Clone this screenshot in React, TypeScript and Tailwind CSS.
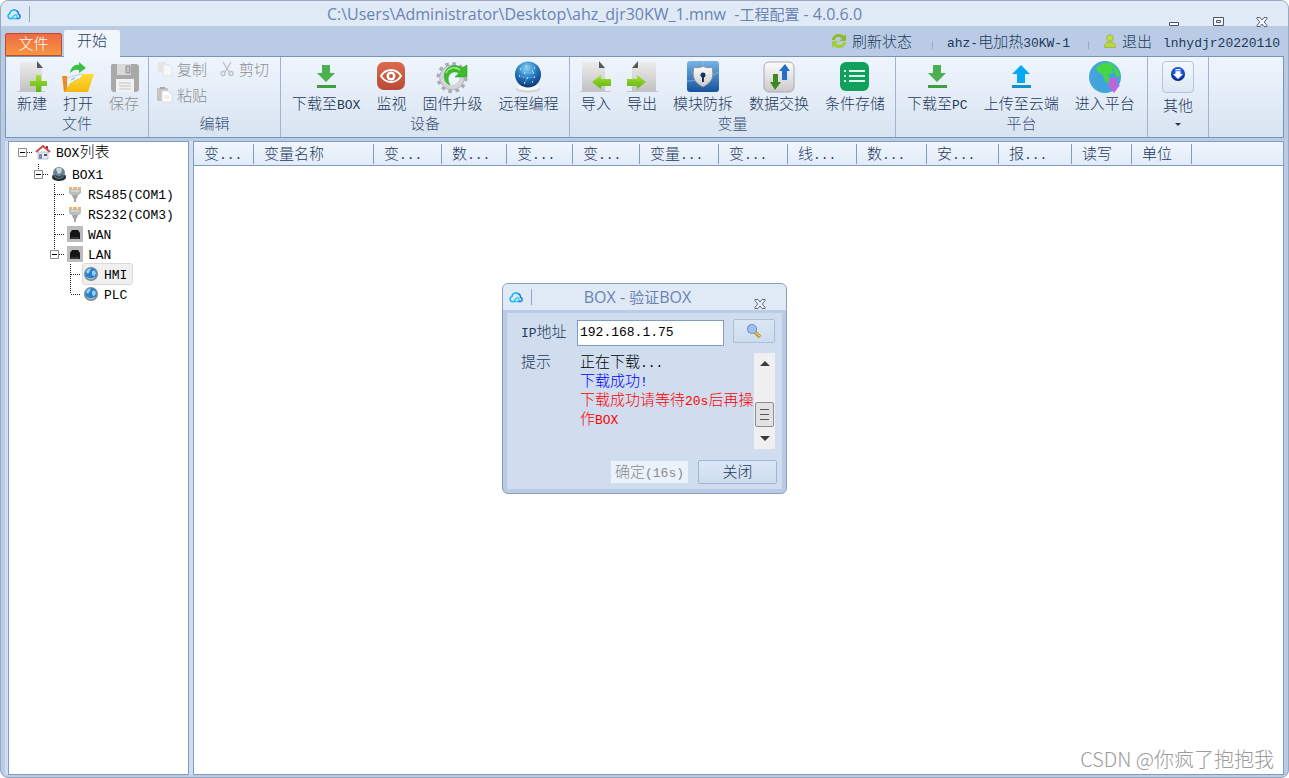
import { Fragment, type ReactNode } from "react";
import clsx from "clsx";

const SONG = "font-['Noto_Sans_CJK_SC',sans-serif] font-light text-[15px] leading-5";

// Latin runs are set in a half-width face, CJK keeps the full size
function Txt({ children }: { children: string }) {
  const parts = children.split(/([\x20-\x7e]+)/).filter(Boolean);
  return (
    <>
      {parts.map((p, i) =>
        /^[\x20-\x7e]/.test(p) ? (
          <span key={i} className="font-['Liberation_Mono',monospace] text-[13px] leading-none whitespace-pre">{p}</span>
        ) : (
          <Fragment key={i}>{p}</Fragment>
        )
      )}
    </>
  );
}

/* ---------- icons ---------- */

function Defs() {
  return (
    <svg width="0" height="0" className="absolute" aria-hidden="true">
      <defs>
        <linearGradient id="page" x1="0" y1="0" x2="0" y2="1">
          <stop offset="0" stopColor="#ececec" />
          <stop offset="1" stopColor="#c2c2c2" />
        </linearGradient>
        <linearGradient id="green" x1="0" y1="0" x2="0" y2="1">
          <stop offset="0" stopColor="#a4e02c" />
          <stop offset="1" stopColor="#5fb414" />
        </linearGradient>
        <linearGradient id="red" x1="0" y1="0" x2="0" y2="1">
          <stop offset="0" stopColor="#dd6a4e" />
          <stop offset="1" stopColor="#b94a37" />
        </linearGradient>
        <linearGradient id="blue" x1="0" y1="0" x2="0" y2="1">
          <stop offset="0" stopColor="#76b4e8" />
          <stop offset="1" stopColor="#15539f" />
        </linearGradient>
        <linearGradient id="silver" x1="0" y1="0" x2="0" y2="1">
          <stop offset="0" stopColor="#fdfdfd" />
          <stop offset="1" stopColor="#c9c9cb" />
        </linearGradient>
        <linearGradient id="folder" x1="0" y1="0" x2="0" y2="1">
          <stop offset="0" stopColor="#ffdc39" />
          <stop offset="1" stopColor="#f5b90f" />
        </linearGradient>
        <radialGradient id="ball" cx=".45" cy=".25" r=".8">
          <stop offset="0" stopColor="#8fd3f4" />
          <stop offset=".5" stopColor="#2377bd" />
          <stop offset="1" stopColor="#0b2d66" />
        </radialGradient>
        <radialGradient id="ball2" cx=".5" cy=".4" r=".6">
          <stop offset="0" stopColor="#3d8bff" />
          <stop offset=".6" stopColor="#1550d8" />
          <stop offset="1" stopColor="#06185e" />
        </radialGradient>
      </defs>
    </svg>
  );
}

function Icon({ children, size = 32 }: { children: ReactNode; size?: 14 | 16 | 32 }) {
  return (
    <svg viewBox={`0 0 ${size} ${size}`} width={size} height={size} className="block shrink-0" aria-hidden="true">
      {children}
    </svg>
  );
}

function CloudLogo() {
  return (
    <Icon size={14}>
      <path d="M5.500 11.500H3.500a2.500 2.500 0 0 1-.6-4.900A4 4 0 0 1 10 4.400" fill="none" stroke="#1ab0f5" strokeWidth="1.500" />
      <path d="M4.500 11.500 7.500 8c1.500-.8 3 .8 2.500 3.500z" fill="none" stroke="#25c8f8" strokeWidth="1.300" />
      <path d="M9.500 3.800c1.500.6 2 2 2 3.400a2.300 2.300 0 0 1 0 4.400H9.800" fill="none" stroke="#1674e8" strokeWidth="1.500" />
    </Icon>
  );
}

const NewIcon = () => (
  <Icon>
    <path d="M1 30.500h28" stroke="#aaa" strokeOpacity=".6" />
    <path d="M4 1h17l5 6v23H4z" fill="url(#page)" />
    <path d="M21 0v7h6z" fill="#585858" />
    <path d="M20 14h5v6h6v5h-6v6h-5v-6h-6v-5h6z" fill="url(#green)" />
  </Icon>
);

const OpenIcon = () => (
  <Icon>
    <path d="M0 15h5v15l-3 1z" fill="#ef8b1d" />
    <path d="m5 17 14-4 8 4-3 10H5z" fill="#eef3f8" stroke="#9fb4c8" strokeWidth=".6" />
    <path d="m9 19 4-2m-2 4 6-3m-3 3 6-2" stroke="#7fa6cb" />
    <path d="M8 22 17 18l4-5h11l-6 18H3z" fill="url(#folder)" />
    <path d="M8 12c1-7 6-9 9-8V1l7 6-7 5V9c-4-1-6 0-9 3z" fill="#3cc043" />
  </Icon>
);

const SaveIcon = () => (
  <Icon>
    <path d="M4 3h25l2 2v24l-2 2H5l-2-2V4z" fill="#a9a9a9" />
    <path d="M9 3h14v11H9z" fill="#d9d9d9" />
    <path d="M18 5h4v7h-4z" fill="#c1c1c1" stroke="#8f8f8f" />
    <path d="M8 18h18v13H8z" fill="#f2f2f2" />
    <path d="M11 22h12M11 25h12M11 28h12" stroke="#c4c4c4" />
  </Icon>
);

const CopyIcon = () => (
  <Icon size={16}>
    <path d="M1 1h8v10H1z" fill="#e3e5e8" />
    <path d="M6 4h6l3 3v8H6z" fill="#f6f7f9" stroke="#e0e3e7" />
  </Icon>
);

const PasteIcon = () => (
  <Icon size={16}>
    <path d="M0 1h11v13H0z" fill="#c4c4c4" />
    <path d="M3 0h5v2H3z" fill="#aaa" />
    <path d="M5 4h6l4 4v7H5z" fill="#fff" stroke="#dcdcdc" />
    <path d="M7 9h5m-5 2h6" stroke="#dedede" />
  </Icon>
);

const CutIcon = () => (
  <Icon size={16}>
    <path d="m4 1 6 10M12 1 6 11" stroke="#bdc0c4" strokeWidth="1.4" />
    <circle cx="4" cy="12.500" r="2" fill="none" stroke="#bdc0c4" strokeWidth="1.300" />
    <circle cx="12" cy="12.500" r="2" fill="none" stroke="#bdc0c4" strokeWidth="1.300" />
  </Icon>
);

const DownloadIcon = () => (
  <Icon>
    <path d="M12 4h8v8h5l-9 9-9-9h5z" fill="#4caf50" />
    <path d="M7 24h19v3H7z" fill="#3f9d44" />
  </Icon>
);

const UploadIcon = () => (
  <Icon>
    <path d="M12 22h8v-9h5l-9-9-9 9h5z" fill="#03a9f4" />
    <path d="M7 24h19v3H7z" fill="#1290cc" />
  </Icon>
);

const EyeIcon = () => (
  <Icon>
    <rect x="2" y="1" width="28" height="28" rx="7" fill="url(#red)" />
    <path d="M6 15c5-8 15-8 20 0-5 8-15 8-20 0z" fill="none" stroke="#fff" strokeWidth="2" />
    <circle cx="16" cy="15" r="4.500" fill="#fff" />
    <circle cx="16" cy="15" r="2" fill="#c65642" />
  </Icon>
);

const GearIcon = () => (
  <Icon>
    <circle cx="16" cy="16.500" r="13.500" fill="none" stroke="#a8abb3" strokeWidth="4" strokeDasharray="3.500 3.570" />
    <circle cx="16" cy="16.500" r="10" fill="none" stroke="#d3d5d9" strokeWidth="5" />
    <circle cx="16" cy="16.500" r="12.300" fill="none" stroke="#a2a5ad" strokeWidth=".7" />
    <circle cx="17" cy="16" r="6" fill="#eaf6fb" />
    <path d="M14 24C6 21 6 8 16 5c4-1 8 0 10 2l5-3v12H19l4-4c-8-4-14 4-9 12z" fill="#3dbb2d" stroke="#2c9a22" strokeWidth=".5" />
    <path d="M10 12c2-5 9-7 14-3" fill="none" stroke="#a6ed8d" strokeWidth="1.500" />
  </Icon>
);

const GlobeIcon = () => (
  <Icon>
    <ellipse cx="16" cy="28" rx="12" ry="3.500" fill="#cfd2d6" />
    <ellipse cx="16" cy="26.500" rx="11" ry="3" fill="#f8f8f8" />
    <circle cx="16" cy="13.500" r="13" fill="url(#ball)" />
    <path d="M8 8h1m5-3h1m7 2h1m-11 5h1m8 0h1M7 15h1m7 2h1m6-1h1m-11 6h1m7-1h1m-1-11h1" stroke="#cdf1ff" strokeWidth="1.400" />
    <path d="m8 8 6 4 8 0M7 15l8 2 7-1m-7 1-2 5" stroke="#8fd5f4" strokeWidth=".4" fill="none" />
  </Icon>
);

const ImportIcon = () => (
  <Icon>
    <path d="M0 30.500h31" stroke="#aaa" strokeOpacity=".6" />
    <path d="M2 1h17l6 6v23H2z" fill="url(#page)" />
    <path d="M19 0v7h6z" fill="#585858" />
    <path d="m12 21 9-7v4h10v7H21v3z" fill="url(#green)" />
  </Icon>
);

const ExportIcon = () => (
  <Icon>
    <path d="M1 30.500h31" stroke="#aaa" strokeOpacity=".6" />
    <path d="M12 1h18v29H6V7z" fill="url(#page)" />
    <path d="M12 0v7H6z" fill="#585858" />
    <path d="m20 21-9-7v4H1v7h10v3z" fill="url(#green)" />
  </Icon>
);

const ShieldIcon = () => (
  <Icon>
    <rect x="0" y="0" width="32" height="31" rx="3" fill="url(#blue)" />
    <path d="M16 0v8M0 20c10 0 22-3 32-9" stroke="#8ec3ef" strokeWidth=".7" fill="none" />
    <path d="M16 5c3 2 6 2 9 1 2 9 1 15-9 20C6 21 5 15 7 6c3 1 6 1 9-1z" fill="url(#silver)" stroke="#8b8f96" />
    <circle cx="16" cy="14" r="2.500" fill="#18335c" />
    <path d="M15 15h2v6h-2z" fill="#18335c" />
  </Icon>
);

const SwapIcon = () => (
  <Icon>
    <rect x="1" y="1" width="30" height="30" rx="5" fill="url(#silver)" stroke="#aaa" />
    <path d="M10 13h5v8h3l-6 8-5-8h3z" fill="#3d8a22" />
    <path d="M19 19v-9h-3l6-7 5 7h-3v9z" fill="#236fc8" />
  </Icon>
);

const ListIcon = () => (
  <Icon>
    <rect x="1" y="1" width="29" height="29" rx="6" fill="#0fa15b" />
    <path d="M10 10h16M10 15h16M10 20h16" stroke="#dff6ea" strokeWidth="2" />
    <path d="M5 10h2M5 15h2M5 20h2" stroke="#dff6ea" strokeWidth="2" />
  </Icon>
);

const PlatformIcon = () => (
  <Icon>
    <circle cx="16" cy="16" r="16" fill="#41a5dc" />
    <path d="M9 5c4-3 9-4 13-3l4 4-3 2 1 4-5 2 2 4-1 5-4-3-2-6-5-3-2-4z" fill="#43d843" />
    <path d="m25 5 5 5 1 6-4-1-2-5z" fill="#43d843" />
    <path d="M20 17h8v7h3l-6 8-6-8h1z" fill="#bd63dc" />
  </Icon>
);

const RefreshIcon = () => (
  <Icon size={16}>
    <path d="M1 7C1 1 9-1 13 3l2-2v7H8l3-2.500C8 3 4 4 4 7z" fill="#8dbb2a" />
    <path d="M15 9c0 6-8 8-12 4l-2 2V8h7l-3 2.500C8 13 12 12 12 9z" fill="#a3cd36" />
  </Icon>
);

const UserIcon = () => (
  <Icon size={14}>
    <circle cx="7" cy="4" r="3.300" fill="#c3dc45" stroke="#93ad2b" strokeWidth=".7" />
    <path d="M1.500 13.500c0-4 2-5 4-5.500h3c2 .5 4 1.500 4 5.500z" fill="#bcd740" stroke="#93ad2b" strokeWidth=".7" />
  </Icon>
);

const OtherIcon = () => (
  <Icon size={16}>
    <circle cx="8" cy="8" r="7" fill="url(#ball2)" />
    <path d="M5.500 3h5v1.200h-5zM5.500 5.200h5V8H13l-5 5-5-5h2.500z" fill="#fff" />
  </Icon>
);

const HouseIcon = () => (
  <Icon size={16}>
    <path d="M3 8h10v7H3z" fill="#e6e8ee" stroke="#a9afbd" strokeWidth=".7" />
    <path d="M11 2h2v4h-2z" fill="#9a3a32" />
    <path d="m1 8 7-6 7 6" fill="none" stroke="#c9494a" strokeWidth="2" />
    <path d="M4 10h3v5H4z" fill="#6d8fc4" />
    <path d="M9 10h3v2H9z" fill="#4b5a78" />
  </Icon>
);

const BoxIcon = () => (
  <Icon size={16}>
    <path d="M1.500 9h13l.5 3c-2 4-12 4-14 0z" fill="#26292d" />
    <circle cx="8" cy="7" r="6" fill="#6c8290" />
    <path d="M5 3c2-2 5-1 6 0l-1 4-3 1z" fill="#c1d6dd" />
    <path d="M4 9c2 3 6 3 8 0" stroke="#33474f" fill="none" strokeWidth="1.500" />
  </Icon>
);

const PlugIcon = () => (
  <Icon size={16}>
    <path d="M2 1h3v2H2zm4 0h4v2H6zm5 0h3v2h-3z" fill="#f3b65c" />
    <path d="M2 3h12v4l-2 2H4L2 7z" fill="#bcbdbf" />
    <path d="M5 9h6l-1 3-1 1v3H7v-3l-1-1z" fill="#a3a4a6" />
    <path d="M4 5h8" stroke="#e9e9e9" />
  </Icon>
);

const PortIcon = () => (
  <Icon size={16}>
    <path d="M0 0h16v16H0z" fill="#bcbcbc" />
    <path d="M3 13V7l2-3h6l2 3v6z" fill="#151515" />
    <path d="M4 12h8" stroke="#555" />
  </Icon>
);

const EarthIcon = () => (
  <Icon size={16}>
    <circle cx="8" cy="8" r="7" fill="#7b8b96" />
    <circle cx="8" cy="7.500" r="5.500" fill="#2a7fc8" />
    <path d="M3 6c1-3 3-4 5-3.500L7 5 5 8zm6-1 3-.5 1 3-2 3-2-2z" fill="#8fd0f4" />
    <path d="M4 11c2 2.500 6 2.500 8 0" fill="none" stroke="#c3ccd2" />
  </Icon>
);

const SearchIcon = () => (
  <Icon size={16}>
    <path d="m9 9 5 5" stroke="#b79526" strokeWidth="3.500" />
    <path d="m9 9 5 4" stroke="#e3cf6d" strokeWidth="1.200" />
    <circle cx="6" cy="6" r="4.500" fill="#9cc1f2" stroke="#7b93c4" strokeWidth="1.200" />
  </Icon>
);

const CloseIcon = () => (
  <Icon size={14}>
    <path d="M2 2.500h3L7 5l2-2.500h3v1.200L9.200 7l2.800 3.300v1.200H9L7 9l-2 2.500H2v-1.200L4.800 7 2 3.700z" fill="#f4f7fb" stroke="#4c5666" strokeWidth=".9" />
  </Icon>
);

/* ---------- ribbon ---------- */

type Tool = { label: string; icon: ReactNode; disabled?: boolean };

function RibbonGroup({ title, width, children }: { title: string; width: string; children: ReactNode }) {
  return (
    <section className={clsx("flex shrink-0 flex-col justify-between border-r border-[#9db4d3] pb-1", width)}>
      {children}
      <h2 className="text-center text-[#3b5178]">{title}</h2>
    </section>
  );
}

function Tools({ items }: { items: Tool[] }) {
  return (
    <div className="flex gap-4 px-[11px] pt-1">
      {items.map((t) => (
        <button key={t.label} disabled={t.disabled} className="flex flex-col items-center whitespace-nowrap disabled:text-[#8d8d8d]">
          <span className="flex w-[30px] justify-center">{t.icon}</span>
          <span><Txt>{t.label}</Txt></span>
        </button>
      ))}
    </div>
  );
}

const FILE_TOOLS: Tool[] = [
  { label: "新建", icon: <NewIcon /> },
  { label: "打开", icon: <OpenIcon /> },
  { label: "保存", icon: <SaveIcon />, disabled: true },
];

const DEVICE_TOOLS: Tool[] = [
  { label: "下载至BOX", icon: <DownloadIcon /> },
  { label: "监视", icon: <EyeIcon /> },
  { label: "固件升级", icon: <GearIcon /> },
  { label: "远程编程", icon: <GlobeIcon /> },
];

const VARIABLE_TOOLS: Tool[] = [
  { label: "导入", icon: <ImportIcon /> },
  { label: "导出", icon: <ExportIcon /> },
  { label: "模块防拆", icon: <ShieldIcon /> },
  { label: "数据交换", icon: <SwapIcon /> },
  { label: "条件存储", icon: <ListIcon /> },
];

const PLATFORM_TOOLS: Tool[] = [
  { label: "下载至PC", icon: <DownloadIcon /> },
  { label: "上传至云端", icon: <UploadIcon /> },
  { label: "进入平台", icon: <PlatformIcon /> },
];

function Ribbon() {
  return (
    <div className="mx-1 flex h-[82px] shrink-0 border border-[#7795bb] bg-linear-to-b from-[#eff5fd] to-[#d8e4f1]">
      <RibbonGroup title="文件" width="w-[143px]">
        <Tools items={FILE_TOOLS} />
      </RibbonGroup>
      <RibbonGroup title="编辑" width="w-[132px]">
        <div className="grid grid-cols-[auto_auto] justify-start gap-x-3 gap-y-[6px] pt-[2px] pl-2 text-[#8d8d8d]">
          <button disabled className="flex items-center gap-1"><CopyIcon />复制</button>
          <button disabled className="flex items-center gap-1"><CutIcon />剪切</button>
          <button disabled className="flex items-center gap-1"><PasteIcon />粘贴</button>
        </div>
      </RibbonGroup>
      <RibbonGroup title="设备" width="w-[289px]">
        <Tools items={DEVICE_TOOLS} />
      </RibbonGroup>
      <RibbonGroup title="变量" width="w-[326px]">
        <Tools items={VARIABLE_TOOLS} />
      </RibbonGroup>
      <RibbonGroup title="平台" width="w-[252px]">
        <Tools items={PLATFORM_TOOLS} />
      </RibbonGroup>
      <div className="flex w-[61px] shrink-0 justify-center border-r border-[#9db4d3] pt-1">
        <button className="flex flex-col items-center">
          <span className="flex h-8 w-8 justify-center rounded border border-[#b3c3d9] bg-linear-to-b from-[#f3f8fe] to-[#dde7f3] pt-1">
            <OtherIcon />
          </span>
          <span className="pt-[2px]">其他</span>
          <svg width="6" height="12" viewBox="0 0 6 12" aria-hidden="true">
            <path d="M0 8h6L3 11z" fill="#1e395b" />
          </svg>
        </button>
      </div>
    </div>
  );
}

/* ---------- tree ---------- */

type Node = { label: string; icon: ReactNode; children?: Node[]; selected?: boolean };

const TREE: Node = {
  label: "BOX列表",
  icon: <HouseIcon />,
  children: [
    {
      label: "BOX1",
      icon: <BoxIcon />,
      children: [
        { label: "RS485(COM1)", icon: <PlugIcon /> },
        { label: "RS232(COM3)", icon: <PlugIcon /> },
        { label: "WAN", icon: <PortIcon /> },
        {
          label: "LAN",
          icon: <PortIcon />,
          children: [
            { label: "HMI", icon: <EarthIcon />, selected: true },
            { label: "PLC", icon: <EarthIcon /> },
          ],
        },
      ],
    },
  ],
};

function Branch({ node, root, last }: { node: Node; root?: boolean; last?: boolean }) {
  const lines = (
    <svg width="21" height="20" viewBox="0 0 21 20" className="block" aria-hidden="true">
      {!root && <path d={last ? "M8.5 0v10" : "M8.5 0v20"} stroke="#222" strokeDasharray="1 1" />}
      <path d="M9 10.500h9" stroke="#222" strokeDasharray="1 1" />
      {node.children && (
        <>
          <path d="M4.500 6.500h8v8h-8z" fill="#fff" stroke="#8a8a8a" />
          <path d="M6 10.500h5" stroke="#000" />
        </>
      )}
    </svg>
  );
  return (
    <li>
      <div className="flex h-5 items-center">
        {node.children ? <button aria-label={`折叠 ${node.label}`}>{lines}</button> : lines}
        <a
          href="#"
          className={clsx(
            "flex h-5 items-center gap-[5px] pr-[5px] whitespace-nowrap",
            node.selected && "rounded-xs bg-[#f0f0f0] outline outline-[#d9d9d9]"
          )}
        >
          {node.icon}
          <span className="pb-[2px]"><Txt>{node.label}</Txt></span>
        </a>
      </div>
      {node.children && (
        <ul className={clsx("pl-4", root && "pt-[2px]")}>
          {node.children.map((c, i) => (
            <Branch key={c.label} node={c} last={i === node.children!.length - 1} />
          ))}
        </ul>
      )}
    </li>
  );
}

/* ---------- variable table ---------- */

const COLUMNS = [
  { label: "变...", width: 60 },
  { label: "变量名称", width: 120 },
  { label: "变...", width: 68 },
  { label: "数...", width: 65 },
  { label: "变...", width: 66 },
  { label: "变...", width: 67 },
  { label: "变量...", width: 79 },
  { label: "变...", width: 69 },
  { label: "线...", width: 69 },
  { label: "数...", width: 70 },
  { label: "安...", width: 72 },
  { label: "报...", width: 73 },
  { label: "读写", width: 60 },
  { label: "单位", width: 60 },
];

function VariableTable() {
  return (
    <table className="w-full table-fixed border-collapse">
      <thead>
        <tr className="border-b border-[#7f9dc4] bg-linear-to-b from-[#f1f6fd] to-[#e1ebf8] text-left">
          {COLUMNS.map((c, i) => (
            <th key={i} style={{ width: c.width }} className="p-0 pt-[2px] pb-px font-light whitespace-nowrap">
              <div className="h-5 border-r border-[#7f9dc4] pl-[10px] leading-[18px]">
                <Txt>{c.label}</Txt>
              </div>
            </th>
          ))}
          <td />
        </tr>
      </thead>
      <tbody />
    </table>
  );
}

/* ---------- dialog ---------- */

function VerifyDialog() {
  return (
    <div role="dialog" aria-label="BOX - 验证BOX" className="w-[285px] overflow-hidden rounded-md border border-[#8b9db8] bg-[#bacce5]">
      <header className="flex h-[26px] items-center bg-[#dfeaf6] pr-[19px] pl-[6px]">
        <CloudLogo />
        <span className="ml-2 h-4 border-l border-[#8ea5c8]" />
        <h2 className="flex-1 pr-[10px] text-center font-['Open_Sans','Noto_Sans_CJK_SC',sans-serif] text-[16px] font-normal text-[#6a83b3]">
          BOX - <span className="text-[15px] leading-none">验证</span>BOX
        </h2>
        <button aria-label="关闭窗口" className="pt-[14px]"><CloseIcon /></button>
      </header>
      <div className="m-1 mt-[3px] bg-[#cfddee] pt-[6px] pr-[5px] pb-[5px] pl-[14px]">
        <div className="grid grid-cols-[56px_147px_1fr] items-start">
          <label htmlFor="ip" className="pt-[2px]"><Txt>IP地址</Txt></label>
          <input
            id="ip"
            defaultValue="192.168.1.75"
            className="mt-px h-[26px] w-full border border-[#7f9dc4] bg-white px-[2px] pb-px font-['Liberation_Mono',monospace] text-[13px] text-black"
          />
          <button aria-label="搜索" className="ml-[9px] flex h-6 w-[42px] items-center justify-center rounded-xs border border-[#abbfdc] bg-linear-to-b from-[#dbe7f5] to-[#cddcee]">
            <SearchIcon />
          </button>
        </div>
        <div className="mt-[5px] flex leading-[19px]">
          <div className="w-[59px]">提示</div>
          <div className="w-[174px] text-black">
            <p><Txt>正在下载...</Txt></p>
            <p className="text-[#0000ff]"><Txt>下载成功!</Txt></p>
            <p className="text-[#ff0000]"><Txt>下载成功请等待20s后再操作BOX</Txt></p>
          </div>
          <div className="mt-[2px] h-24 w-[21px] bg-[#f0f0f0]">
            <svg width="21" height="96" viewBox="0 0 21 96" className="block" aria-hidden="true">
              <path d="m6 13 5-5 5 5zM6 83l5 5 5-5z" fill="#3c3c3c" />
              <rect x="1.500" y="49.500" width="18" height="24" rx="1.500" fill="#e2e2e2" stroke="#8e8e8e" />
              <path d="M6 56.500h9M6 61.500h9M6 66.500h9" stroke="#555" />
            </svg>
          </div>
        </div>
        <div className="mt-[11px] flex items-center justify-end gap-[10px]">
          <button disabled className="h-[22px] w-[77px] bg-[#eaf2fb] pb-1 text-[#8d8d8d]"><Txt>确定(16s)</Txt></button>
          <button className="h-6 w-[79px] rounded-xs border border-[#9fb6d6] bg-linear-to-b from-[#dbe7f5] to-[#cddcee] pb-2">关闭</button>
        </div>
      </div>
    </div>
  );
}

export default function App() {
  return (
    <div className={clsx("relative flex h-screen flex-col overflow-hidden rounded-lg border border-[#98a8bf] bg-[#bacce5] text-[#1e395b]", SONG)}>
      <Defs />

      <header className="flex h-[25px] shrink-0 items-center bg-[#dfeaf6] pr-[19px] pl-[6px]">
        <CloudLogo />
        <span className="ml-2 h-4 border-l border-[#8ea5c8]" />
        <h1 className="flex-1 pr-2 text-center font-['Open_Sans','Noto_Sans_CJK_SC',sans-serif] text-[16px] font-normal whitespace-pre text-[#6a83b3]">
          {"C:\\Users\\Administrator\\Desktop\\ahz_djr30KW_1.mnw  -"}
          <span className="text-[15px] leading-none">工程配置</span>
          {" - 4.0.6.0"}
        </h1>
        <div className="flex gap-[30px] pt-4">
          <button aria-label="最小化">
            <Icon size={14}><path d="M2.500 7.500h9v3h-9z" fill="#fff" stroke="#4c5666" /></Icon>
          </button>
          <button aria-label="最大化">
            <Icon size={14}><path d="M2.500 2.500h10v8h-10zM5.500 5.500h4v2h-4z" fill="#f4f7fb" stroke="#4c5666" /></Icon>
          </button>
          <button aria-label="关闭"><CloseIcon /></button>
        </div>
      </header>

      <nav className="flex h-[30px] shrink-0 items-end pr-2 pl-1">
        <button className="h-[23px] w-[57px] rounded-t-xs border border-[#c9472b] bg-linear-to-b from-[#ee6a45] to-[#f5953f] pb-1 leading-[18px] text-white">文件</button>
        <button className="relative -mb-px ml-[2px] h-[27px] w-[56px] rounded-t-xs bg-[#f1f6fd] pb-[7px]">开始</button>
        <div className="ml-auto flex h-[30px] items-center whitespace-nowrap">
          <button className="flex items-center gap-[5px]"><RefreshIcon />刷新状态</button>
          <span className="mt-2 ml-5 h-2 border-l border-[#9aabc4]" />
          <span className="ml-[14px]"><Txt>ahz-电加热30KW-1</Txt></span>
          <span className="mt-2 ml-[18px] h-2 border-l border-[#9aabc4]" />
          <button className="ml-[14px] flex items-center gap-[5px]"><UserIcon />退出</button>
          <span className="ml-[11px]"><Txt>lnhydjr20220110</Txt></span>
        </div>
      </nav>

      <Ribbon />

      <main className="mx-1 mt-[3px] mb-[2px] flex min-h-0 flex-1 gap-1 bg-[#cfddee] pl-[3px]">
        <aside className="w-[181px] shrink-0 overflow-hidden border border-[#7f9dc4] bg-white text-black">
          <ul className="pl-[5px]"><Branch node={TREE} root /></ul>
        </aside>
        <section className="min-w-0 flex-1 border border-[#7f9dc4] bg-white">
          <VariableTable />
        </section>
      </main>

      <div className="absolute inset-0 flex items-center justify-center pb-[2px]">
        <VerifyDialog />
      </div>
      <p className="absolute right-[14px] bottom-1 text-[20px] leading-7 text-[#9b9b9b]">CSDN @你疯了抱抱我</p>
    </div>
  );
}
